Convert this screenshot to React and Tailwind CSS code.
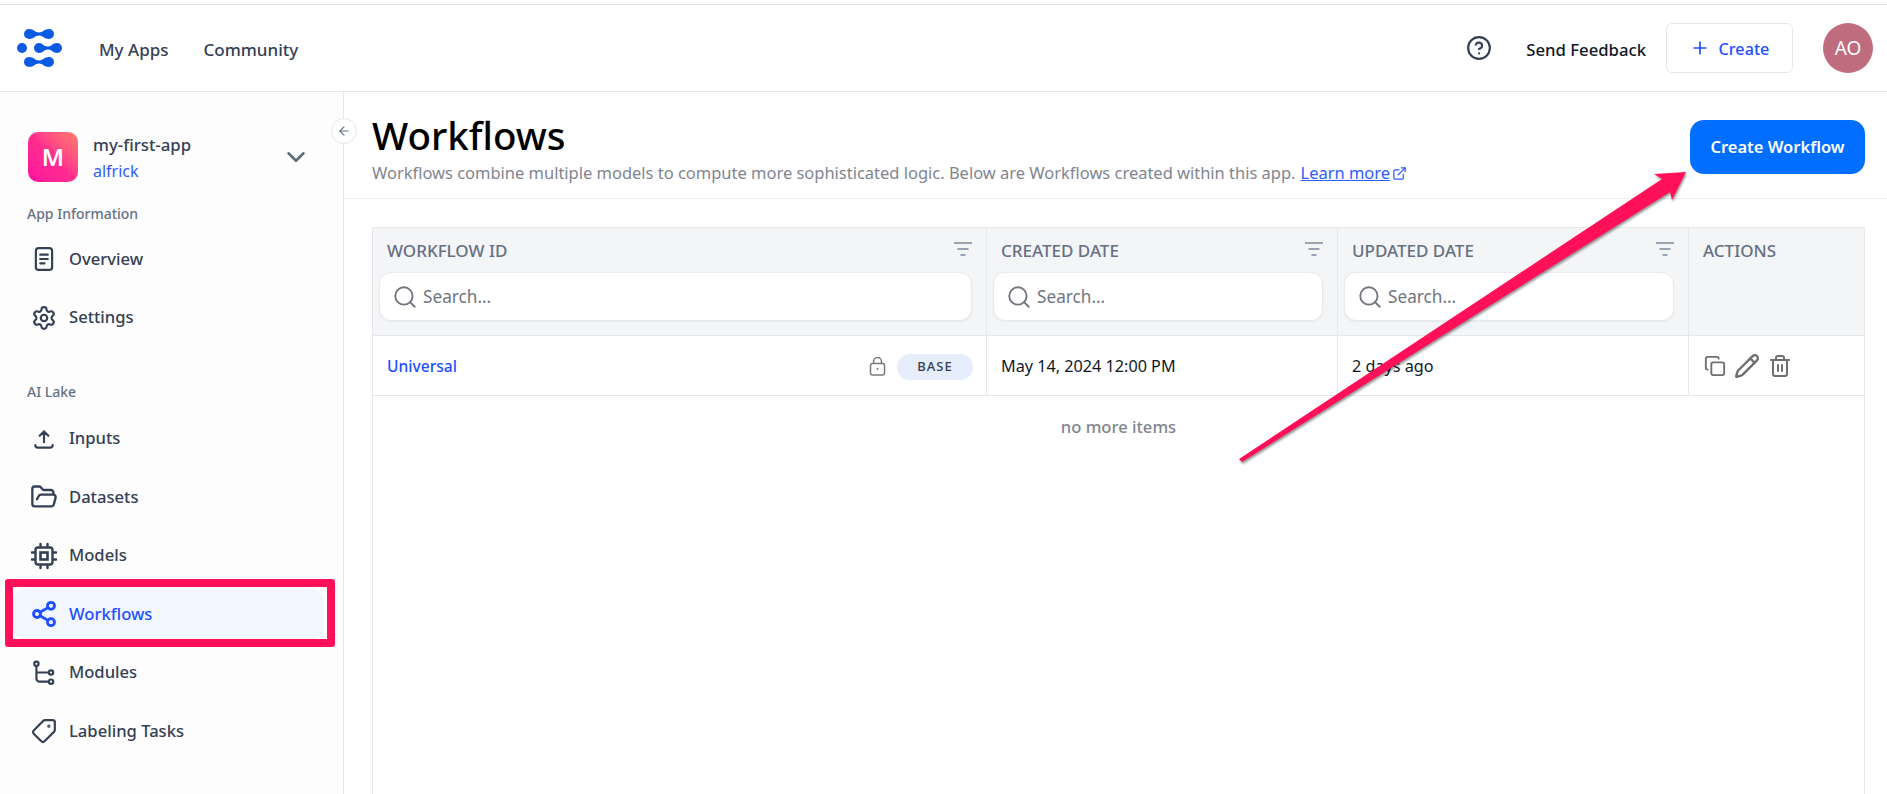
import React from "react";
import { Settings, FolderOpen, Share2, Tag, ChevronDown, ArrowLeft, CircleHelp, Plus, Search, Copy, Pencil, Trash2, ExternalLink } from "lucide-react";

function Logo() {
  const bar = "c5 0 6 3.500 10 3.500 c4 0 5 -3.500 10 -3.500 a5 5 0 0 1 0 10 c-5 0 -6 -3.500 -10 -3.500 c-4 0 -5 3.500 -10 3.500 a5 5 0 0 1 0 -10z";
  return (
    <svg width="46" height="38" viewBox="0 0 46 38" fill="#0a5ae6" className="shrink-0">
      <path d={`M12 0${bar}`} />
      <circle cx="5" cy="19" r="5" />
      <path d="M22 14c4 0 4 3.500 9 3.500 c4 0 4 -3.500 9 -3.500 a5 5 0 0 1 0 10 c-4 0 -5 -3.500 -9 -3.500 c-4 0 -5 3.500 -9 3.500 a5 5 0 0 1 0 -10z" />
      <path d={`M12 28${bar}`} />
    </svg>
  );
}

function OverviewIcon({ size, className }) {
  return (
    <svg className={className} width={size} height={size} viewBox="0 0 24 24" fill="none" stroke="currentColor" strokeWidth="2" strokeLinecap="round">
      <rect x="4.500" y="2" width="15" height="20" rx="2.500" />
      <path d="M8.500 8h7M8.500 12h7M8.500 16h4" />
    </svg>
  );
}

function UploadIcon({ size, className }) {
  return (
    <svg className={className} width={size} height={size} viewBox="0 0 24 24" fill="none" stroke="currentColor" strokeWidth="2" strokeLinecap="round" strokeLinejoin="round">
      <path d="M12 15V5M8 9l4-4 4 4M4 17.500c0 1.500 1 2.500 2.500 2.500h11c1.500 0 2.500-1 2.500-2.500" />
    </svg>
  );
}

function ChipIcon({ size, className }) {
  return (
    <svg className={className} width={size} height={size} viewBox="0 0 28 28" fill="none" stroke="currentColor" strokeWidth="2.400" strokeLinecap="round">
      <rect x="5.500" y="5.500" width="17" height="17" rx="2.500" />
      <rect x="10.500" y="10.500" width="7" height="7" strokeWidth="2.600" />
      <path d="M10.500 2v3M17.500 2v3M10.500 23v3M17.500 23v3M2 10.500h3M2 17.500h3M23 10.500h3M23 17.500h3" />
    </svg>
  );
}

function ShareIcon({ size, className }) {
  return <Share2 size={size} strokeWidth={2.400} className={className} />;
}

function ModulesIcon({ size, className }) {
  return (
    <svg className={className} width={size} height={size} viewBox="0 0 24 24" fill="none" stroke="currentColor" strokeWidth="2" strokeLinecap="round">
      <circle cx="5" cy="3.500" r="2" />
      <circle cx="18.500" cy="11.500" r="2" />
      <circle cx="18.500" cy="20" r="2" />
      <path d="M5 5.500V17a3 3 0 0 0 3 3h8.500M5 11.500h11.500" />
    </svg>
  );
}

function TagIcon({ size, className }) {
  return <Tag size={size} strokeWidth={2} className={`-scale-x-100 ${className}`} />;
}

function LockIcon() {
  return (
    <svg width="17" height="19" viewBox="0 0 17 19" fill="none" stroke="#7a7a7a" strokeWidth="1.500" className="ml-auto shrink-0">
      <rect x="1.500" y="6.500" width="14" height="11.500" rx="2" />
      <path d="M4.500 6.500V4.500a4 4 0 0 1 8 0v2" />
      <circle cx="8.500" cy="12" r="1" fill="#7a7a7a" stroke="none" />
    </svg>
  );
}

function FilterLines() {
  return (
    <svg width="18" height="14" viewBox="0 0 18 14" fill="none" stroke="#9aa3b2" strokeWidth="2" className="mb-[5px]">
      <path d="M0 1h18M3.500 7h11M6.500 13h5" />
    </svg>
  );
}

function NavItem({ icon: Icon, label, active, size = 26 }) {
  return (
    <div className={`mb-[8.500px] ml-[13px] mr-[19px] flex h-[50px] items-center rounded-xl pl-[17px] ${active ? "bg-[#f2f6ff] text-[#1d4fff]" : "text-[#344054]"}`}>
      <span className="flex w-[28px] shrink-0 items-center justify-center">
        <Icon size={size} strokeWidth={2} className="shrink-0" />
      </span>
      <span className="ml-[11px] text-[16.600px] font-medium">{label}</span>
    </div>
  );
}

function SearchBox() {
  return (
    <div className="flex h-[49px] items-center rounded-xl border border-[#e8eaee] bg-white pl-[12px] text-[17.200px] text-[#70757e] shadow-[0_1px_2px_rgba(16,24,40,0.05)]">
      <Search size={26} strokeWidth={1.700} className="text-[#70757e]" />
      <span className="ml-[5px]">Search...</span>
    </div>
  );
}

function HeadCell({ title, width }) {
  return (
    <div className={`flex shrink-0 flex-col border-r border-[#e6e8ec] pl-[6px] pr-[14px] ${width}`}>
      <div className="flex h-[44px] items-center justify-between pl-[8px] pt-[2px]">
        <span className="text-[17px] font-medium text-[#667085]">{title}</span>
        <FilterLines />
      </div>
      <SearchBox />
    </div>
  );
}

export default function App() {
  return (
    <div className="relative flex h-[794px] w-[1887px] flex-col overflow-hidden bg-white font-['Noto_Sans',sans-serif]">
      <div className="h-[5px] shrink-0 border-b border-[#e4e6e8] bg-white" />
      <header className="flex h-[87px] shrink-0 items-center border-b border-[#e4e7ec] bg-white pl-[17px] pr-[14px]">
        <Logo />
        <nav className="ml-[36px] flex gap-[35px] pt-[3px] text-[17px] font-medium text-[#344054]">
          <span>My Apps</span>
          <span>Community</span>
        </nav>
        <div className="ml-auto flex items-center">
          <CircleHelp size={26} strokeWidth={2} className="text-[#344054]" />
          <span className="ml-[34px] pt-[3px] text-[16.700px] font-medium text-[#101828]">Send Feedback</span>
          <div className="ml-[20px] flex h-[50px] w-[127px] items-center justify-center rounded-md border border-[#e4e7ec] bg-white text-[16.200px] font-medium text-[#1d4fff]">
            <Plus size={20} strokeWidth={2} />
            <span className="ml-[9px] pt-[3px]">Create</span>
          </div>
          <div className="ml-[30px] flex h-[50px] w-[50px] items-center justify-center rounded-full bg-[#c06c7f] text-[19px] text-white">AO</div>
        </div>
      </header>
      <div className="flex min-h-0 flex-1">
        <aside className="relative flex w-[344px] shrink-0 flex-col border-r border-[#e4e7ec] bg-[#fdfdfd]">
          <div className="flex h-[112px] items-start pl-[28px] pr-[32px] pt-[40px]">
            <div className="flex h-[50px] w-[50px] items-center justify-center rounded-[10px] bg-gradient-to-tr from-[#ff0fa0] via-[#ff2d8e] to-[#ff7a66] text-2xl font-semibold text-white">M</div>
            <div className="ml-[15px] flex flex-col">
              <span className="text-[16.800px] leading-[26px] font-medium text-[#344054]">my-first-app</span>
              <span className="text-base leading-[26px] text-[#2f5bff]">alfrick</span>
            </div>
            <ChevronDown size={30} strokeWidth={2} className="ml-auto mt-[10px] text-[#5f6b7c]" />
          </div>
          <div className="mb-[10px] pl-[27px] text-sm leading-[20px] font-medium text-[#667085]">App Information</div>
          <NavItem icon={OverviewIcon} label="Overview" />
          <NavItem icon={Settings} label="Settings" />
          <div className="mb-[11.500px] mt-[31px] pl-[27px] text-sm leading-[20px] font-medium text-[#667085]">AI Lake</div>
          <NavItem icon={UploadIcon} label="Inputs" />
          <NavItem icon={FolderOpen} label="Datasets" size={28} />
          <NavItem icon={ChipIcon} label="Models" size={28} />
          <NavItem icon={ShareIcon} label="Workflows" active size={28} />
          <NavItem icon={ModulesIcon} label="Modules" />
          <NavItem icon={TagIcon} label="Labeling Tasks" />
        </aside>
        <main className="flex min-w-0 flex-1 flex-col">
          <div className="flex h-[107px] shrink-0 border-b border-[#e9ebef] pl-[28px] pr-[22px] pt-[21px]">
            <div>
              <h1 className="text-[38.500px] leading-[44px] font-medium text-black">Workflows</h1>
              <p className="mt-[4px] flex items-center text-[16.480px] leading-[24px] text-[#808590]">
                Workflows combine multiple models to compute more sophisticated logic. Below are Workflows created within this app.
                <span className="ml-[5px] text-[#2f5bff] underline">Learn more</span>
                <ExternalLink size={15} strokeWidth={2} className="ml-[2px] text-[#2f5bff]" />
              </p>
            </div>
            <div className="ml-auto mt-[7px] flex h-[54px] w-[175px] items-center justify-center rounded-[14px] bg-[#006fff] text-[16.500px] font-semibold text-white">Create Workflow</div>
          </div>
          <div className="ml-[28px] mr-[22px] mt-[28px] flex flex-1 flex-col border-x border-t border-[#e6e8ec]">
            <div className="flex h-[108px] shrink-0 border-b border-[#e6e8ec] bg-[#f4f5f7]">
              <HeadCell title="WORKFLOW ID" width="w-[614px]" />
              <HeadCell title="CREATED DATE" width="w-[351px]" />
              <HeadCell title="UPDATED DATE" width="w-[351px]" />
              <div className="flex-1 pl-[14px]">
                <div className="flex h-[44px] items-center pt-[2px] text-[17px] font-medium text-[#667085]">ACTIONS</div>
              </div>
            </div>
            <div className="flex h-[60px] shrink-0 border-b border-[#e6e8ec] text-[16.200px]">
              <div className="flex w-[614px] shrink-0 items-center border-r border-[#e6e8ec] pl-[14px] pr-[13px] pt-[2px]">
                <span className="text-[15.600px] font-medium text-[#1d4fff]">Universal</span>
                <LockIcon />
                <span className="ml-[11px] flex h-[26px] w-[76px] items-center justify-center rounded-full bg-[#e6edfb] text-[13px] font-medium tracking-[1px] text-[#344054]">BASE</span>
              </div>
              <div className="flex w-[351px] shrink-0 items-center border-r border-[#e6e8ec] pl-[14px] pt-[2px] text-[#101828]">May 14, 2024 12:00 PM</div>
              <div className="flex w-[351px] shrink-0 items-center border-r border-[#e6e8ec] pl-[14px] pt-[2px] text-[#101828]">2 days ago</div>
              <div className="flex flex-1 items-center pl-[15px] text-[#6f6f6f]">
                <Copy size={22} strokeWidth={2} />
                <Pencil size={26} strokeWidth={2.200} className="ml-[8px]" />
                <Trash2 size={24} strokeWidth={2} className="ml-[8px]" />
              </div>
            </div>
            <div className="flex h-[62px] shrink-0 items-center justify-center text-[16.600px] font-medium text-[#808590]">no more items</div>
          </div>
        </main>
      </div>

      <div className="absolute left-[331px] top-[118px] flex h-[26px] w-[26px] items-center justify-center rounded-full border border-[#e4e7ec] bg-white text-[#667085]">
        <ArrowLeft size={14} strokeWidth={2} />
      </div>

      <div className="absolute left-[5px] top-[579px] h-[68px] w-[330px] rounded-[3px] border-[8px] border-[#ff1058]" />

      <svg className="pointer-events-none absolute left-0 top-0 drop-shadow-[1px_2px_1px_rgba(0,0,0,0.4)]" width="1887" height="794">
        <polygon points="1239,459 1662,179 1654,174 1686,172 1672,200 1670,192 1242,462" fill="#ff1058" />
      </svg>
    </div>
  );
}
